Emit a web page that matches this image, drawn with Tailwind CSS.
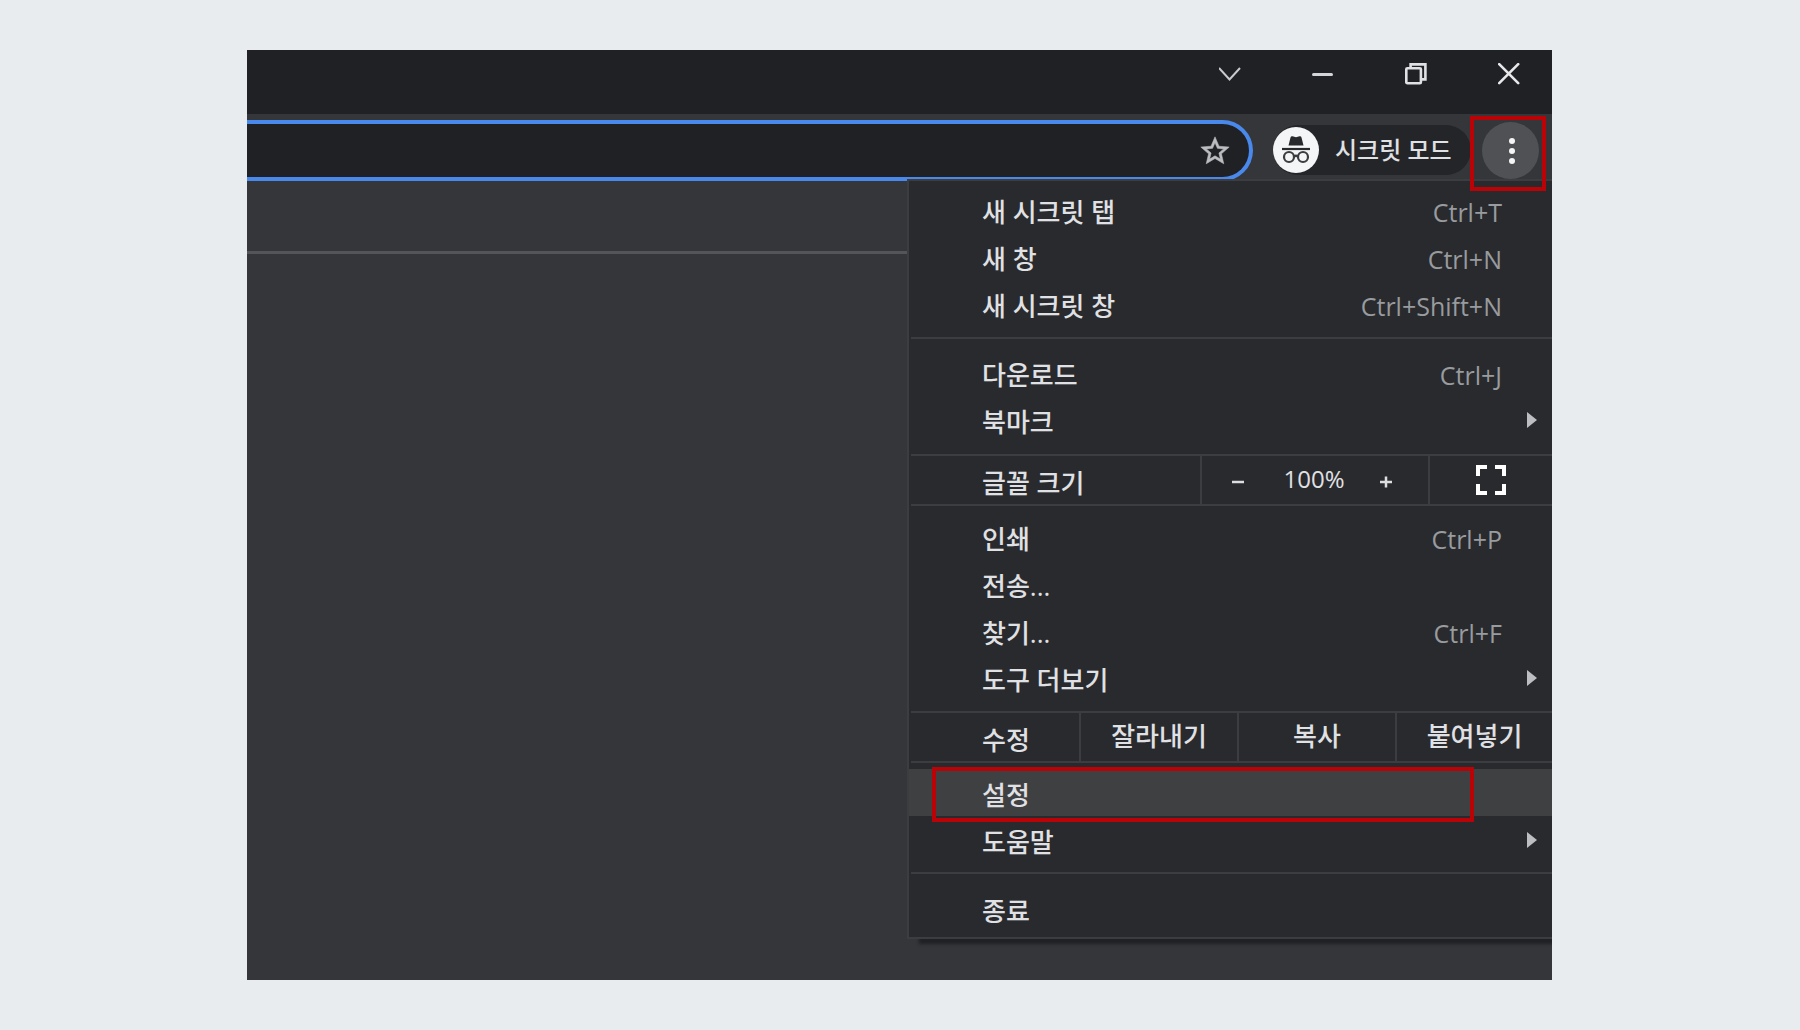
<!doctype html>
<html lang="ko">
    <head>
        <meta charset="UTF-8" />
        <meta name="viewport" content="width=device-width, initial-scale=1.0" />
        <title>시크릿 모드</title>
        <script src="https://cdn.jsdelivr.net/npm/@tailwindcss/browser@4"></script>
        <style>
            body {
                font-family: "Open Sans", "Noto Sans CJK KR", sans-serif;
            }
        </style>
    </head>
    <body class="flex min-h-screen flex-col bg-[#e8ecef] py-[50px] pr-[248px] pl-[247px]">
        <div class="flex flex-1 flex-col overflow-hidden bg-[#35363a] text-[#e0e1e4]">
            <!-- Title bar -->
            <div class="flex h-16 items-start justify-end gap-[71px] bg-[#202124] pt-[13px] pr-8">
                <button aria-label="탭 검색">
                    <svg class="size-[22px]" viewBox="0 0 22 22" fill="none" stroke="#c8cacd" stroke-width="2">
                        <path d="M0 5l10.500 11.500L21 5" />
                    </svg>
                </button>
                <button aria-label="최소화">
                    <svg class="size-[22px]" viewBox="0 0 22 22" fill="none" stroke="#d4d5d7" stroke-width="3">
                        <path d="M1.500 11.500h18" stroke-linecap="round" />
                    </svg>
                </button>
                <button aria-label="이전 크기로">
                    <svg class="size-[22px]" viewBox="0 0 22 22" fill="none" stroke="#e0e1e4" stroke-width="2.6">
                        <rect x="1.3" y="5.2" width="14.6" height="15" rx="1" />
                        <path d="M5.6 5V1.400h14.800v15H16.500" />
                    </svg>
                </button>
                <button aria-label="닫기">
                    <svg class="size-[22px]" viewBox="0 0 22 22" fill="none" stroke="#e8e8ea" stroke-width="2.6">
                        <path d="M1.200 1.200l19 19M20.200 1.200l-19 19" stroke-linecap="round" />
                    </svg>
                </button>
            </div>

            <!-- Toolbar -->
            <div class="flex h-[67px] items-start pt-1.5 pr-[13px]">
                <div
                    class="flex h-[61px] flex-1 items-center rounded-r-full border-y-4 border-r-4 border-[#4a89ec] bg-[#202124] pr-[17px]"
                >
                    <input type="text" aria-label="주소창" class="min-w-0 flex-1 px-4 text-2xl outline-none" />
                    <button aria-label="북마크에 추가">
                        <svg class="size-[34px]" viewBox="0 0 24 24" fill="#bbbdc0" stroke="#bbbdc0" stroke-width=".4">
                            <path
                                d="M22 9.24l-7.19-.62L12 2 9.19 8.63 2 9.24l5.46 4.73L5.82 21 12 17.27 18.18 21l-1.63-7.03L22 9.24zM12 15.4l-3.76 2.27 1-4.28-3.32-2.88 4.38-.38L12 6.1l1.71 4.04 4.38.38-3.32 2.88 1 4.28L12 15.4z"
                            />
                        </svg>
                    </button>
                </div>
                <button
                    class="mt-[5px] ml-5 flex h-[50px] w-[198px] items-center gap-4 rounded-full bg-[#242529] pb-px text-2xl font-medium"
                >
                    <svg class="size-[46px]" viewBox="0 0 46 46">
                        <circle cx="23" cy="23" r="23" fill="#f4f5f7" />
                        <path
                            d="M15.5 18.500l2-8q.5-1.600 2-1.200l3.500 1 3.500-1q1.500-.4 2 1.200l2 8z"
                            fill="#28292c"
                        />
                        <path d="M9 22h28" stroke="#28292c" stroke-width="2.200" />
                        <g fill="none" stroke="#3c3d40" stroke-width="2.200">
                            <circle cx="16" cy="30" r="5" />
                            <circle cx="30" cy="30" r="5" />
                            <path d="M21 29.500q2-1.500 4 0" />
                        </g>
                    </svg>
                    시크릿 모드
                </button>
                <div class="relative ml-[11px]">
                    <button
                        aria-label="Chrome 맞춤설정 및 제어"
                        class="mt-0.5 flex size-[57px] items-center justify-center rounded-full bg-[#505155]"
                    >
                        <svg class="h-7 w-2" viewBox="0 0 8 28" fill="#f5f5f6">
                            <circle cx="5" cy="4" r="3" />
                            <circle cx="5" cy="14" r="3" />
                            <circle cx="5" cy="24" r="3" />
                        </svg>
                    </button>
                    <span class="absolute -top-1 -right-[7px] -bottom-3 -left-3 z-20 border-4 border-[#b90306]"></span>
                </div>
            </div>

            <!-- Page area with the open menu -->
            <main class="relative flex-1">
                <div class="h-[73px] border-b-3 border-[#545558]"></div>

                <nav
                    class="absolute -top-0.5 right-0 z-10 w-[645px] border-y-2 border-l-2 border-[#3c3d41] bg-[#292a2d] text-[26px] leading-8 font-medium shadow-[12px_5px_3px_0_#202124]"
                >
                    <div class="pt-[5px] pb-2.5">
                        <button class="flex h-[47px] w-full items-center justify-between pt-1 pr-[50px] pl-[73px]">
                            새 시크릿 탭 <span class="text-[25px] font-normal text-[#989b9f]">Ctrl+T</span>
                        </button>
                        <button class="flex h-[47px] w-full items-center justify-between pt-1 pr-[50px] pl-[73px]">
                            새 창 <span class="text-[25px] font-normal text-[#989b9f]">Ctrl+N</span>
                        </button>
                        <button class="flex h-[47px] w-full items-center justify-between pt-1 pr-[50px] pl-[73px]">
                            새 시크릿 창 <span class="text-[25px] font-normal text-[#989b9f]">Ctrl+Shift+N</span>
                        </button>
                    </div>

                    <div class="ml-0.5 border-t-2 border-[#3c3d41] pt-2.5 pb-[11px]">
                        <button class="flex h-[47px] w-full items-center justify-between pt-1 pr-[50px] pl-[71px]">
                            다운로드 <span class="text-[25px] font-normal text-[#989b9f]">Ctrl+J</span>
                        </button>
                        <button class="flex h-[47px] w-full items-center justify-between pt-1 pr-[15px] pl-[71px]">
                            북마크
                            <svg class="mb-1 h-4 w-2.5" viewBox="0 0 10 16" fill="#bcbec1"><path d="M0 0l10 8-10 8z" /></svg>
                        </button>
                    </div>

                    <!-- Zoom -->
                    <div class="ml-0.5 flex h-[50px] items-stretch border-t-2 border-[#3c3d41]">
                        <span class="flex flex-1 items-center pt-1.5 pl-[71px]">글꼴 크기</span>
                        <div class="flex items-center border-l-2 border-[#3c3d41] pr-2.5">
                            <button aria-label="축소" class="flex w-[72px] justify-center pt-1">
                                <svg class="size-[14px]" viewBox="0 0 14 14" stroke="#dddee0" stroke-width="2.500">
                                    <path d="M1 7h12" />
                                </svg>
                            </button>
                            <span class="w-20 pb-0.5 text-center text-2xl">100%</span>
                            <button aria-label="확대" class="flex w-16 justify-center pt-1">
                                <svg class="size-[14px]" viewBox="0 0 14 14" stroke="#dddee0" stroke-width="2.500">
                                    <path d="M1 7h12M7 1.500v11" />
                                </svg>
                            </button>
                        </div>
                        <button
                            aria-label="전체화면"
                            class="flex w-[124px] items-center justify-center border-l-2 border-[#3c3d41]"
                        >
                            <svg class="size-[30px]" viewBox="0 0 30 30" fill="none" stroke="#fff" stroke-width="4">
                                <path d="M2 11V2h9M19 2h9v9M28 19v9h-9M11 28H2v-9" />
                            </svg>
                        </button>
                    </div>

                    <div class="ml-0.5 border-t-2 border-[#3c3d41] pt-[7px] pb-2.5">
                        <button class="flex h-[47px] w-full items-center justify-between pt-1 pr-[50px] pl-[71px]">
                            인쇄 <span class="text-[25px] font-normal text-[#989b9f]">Ctrl+P</span>
                        </button>
                        <button class="flex h-[47px] w-full items-center justify-between pt-1 pr-[50px] pl-[71px]">
                            전송...
                        </button>
                        <button class="flex h-[47px] w-full items-center justify-between pt-1 pr-[50px] pl-[71px]">
                            찾기... <span class="text-[25px] font-normal text-[#989b9f]">Ctrl+F</span>
                        </button>
                        <button class="flex h-[47px] w-full items-center justify-between pt-1 pr-[15px] pl-[71px]">
                            도구 더보기
                            <svg class="mb-1 h-4 w-2.5" viewBox="0 0 10 16" fill="#bcbec1"><path d="M0 0l10 8-10 8z" /></svg>
                        </button>
                    </div>

                    <!-- Edit -->
                    <div class="ml-0.5 flex h-[50px] items-stretch border-t-2 border-[#3c3d41]">
                        <span class="flex flex-1 items-center pt-1.5 pl-[71px]">수정</span>
                        <button class="w-[158px] border-l-2 border-[#3c3d41] pb-0.5">잘라내기</button>
                        <button class="w-[158px] border-l-2 border-[#3c3d41] pb-0.5">복사</button>
                        <button class="w-[157px] border-l-2 border-[#3c3d41] pb-0.5">붙여넣기</button>
                    </div>

                    <div class="ml-0.5 border-t-2 border-[#3c3d41]"></div>
                    <div class="pt-1.5 pb-[9px]">
                        <div class="relative">
                            <button class="flex h-[47px] w-full items-center bg-[#3f4042] pt-1 pl-[73px]">설정</button>
                            <span class="absolute -top-0.5 right-[78px] -bottom-1.5 left-[23px] border-4 border-[#b90306]"></span>
                        </div>
                        <button class="flex h-[47px] w-full items-center justify-between pt-1 pr-[15px] pl-[73px]">
                            도움말
                            <svg class="mb-1 h-4 w-2.5" viewBox="0 0 10 16" fill="#bcbec1"><path d="M0 0l10 8-10 8z" /></svg>
                        </button>
                    </div>

                    <div class="ml-0.5 border-t-2 border-[#3c3d41] pt-[11px] pb-[5px]">
                        <button class="flex h-[47px] w-full items-center pt-1 pl-[71px]">종료</button>
                    </div>
                </nav>
            </main>
        </div>
    </body>
</html>
